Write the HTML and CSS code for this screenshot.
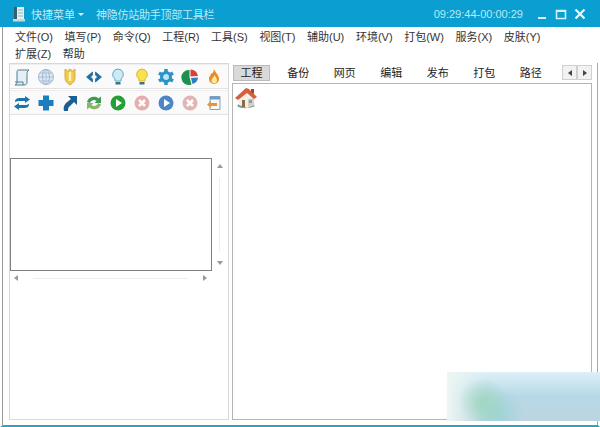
FILE: index.html
```html
<!DOCTYPE html>
<html lang="zh-CN">
<head>
<meta charset="UTF-8" />
<title>神隐仿站助手顶部工具栏</title>
<link rel="stylesheet" href="styles.css">
</head>
<body>

<div class="window">
  <header class="titlebar">
    <svg class="app-icon" width="16" height="18" viewBox="0 0 16 18">
      <path d="M3 2h10v14H3z" fill="#e9eef0"/>
      <path d="M3 2h3v14H3z" fill="#34606f"/>
      <path d="M7 5h5M7 8h5M7 11h5" stroke="#8fb5c2" stroke-width="1.2"/>
      <path d="M2 14h12v2.500H2z" fill="#c9d6da"/>
    </svg>
    <span class="quick">快捷菜单</span>
    <span class="caret"></span>
    <span class="app-title">神隐仿站助手顶部工具栏</span>
    <span class="clock">09:29:44-00:00:29</span>
    <div class="win-btns">
      <svg width="12" height="12" viewBox="0 0 12 12"><path d="M2 10h8" stroke="#d5f1f9" stroke-width="2"/></svg>
      <svg width="12" height="12" viewBox="0 0 12 12"><path d="M1.500 2.500h9v8h-9z" fill="none" stroke="#d5f1f9" stroke-width="1.500"/><path d="M1 3h10" stroke="#d5f1f9" stroke-width="2"/></svg>
      <svg width="12" height="12" viewBox="0 0 12 12"><path d="M1.500 1.500l9 9M10.500 1.500l-9 9" stroke="#e6f7fc" stroke-width="2.200"/></svg>
    </div>
  </header>

  <nav class="menu">
    <a>文件(O)</a>
    <a>填写(P)</a>
    <a>命令(Q)</a>
    <a>工程(R)</a>
    <a>工具(S)</a>
    <a>视图(T)</a>
    <a>辅助(U)</a>
    <a>环境(V)</a>
    <a>打包(W)</a>
    <a>服务(X)</a>
    <a>皮肤(Y)</a>
    <a>扩展(Z)</a>
    <a>帮助</a>
  </nav>

  <div class="content">
    <aside class="side">
      <div class="toolbar">
        <svg width="18" height="18" viewBox="0 0 18 18"><path d="M5 2h11c-2 1-2 3-2 5v7c0 2-1 3-3 3H2c1.500-.5 2-1.500 2-3V4c0-1 .5-2 1-2z" fill="#e6eff3" stroke="#4f7f95"/><path d="M2 14h8v3" fill="none" stroke="#4f7f95"/></svg>
        <svg width="18" height="18" viewBox="0 0 18 18"><circle cx="9" cy="9" r="7.500" fill="#dce9f3" stroke="#9fb9cf"/><ellipse cx="9" cy="9" rx="3.500" ry="7.500" fill="none" stroke="#9fb9cf"/><path d="M1.500 9h15M3 5h12M3 13h12M9 1.500v15" stroke="#9fb9cf" stroke-width=".8"/></svg>
        <svg width="18" height="18" viewBox="0 0 18 18"><path d="M4 1l2.500 2L9 1l2.500 2L14 1v9c0 3-2.500 5.500-5 7-2.500-1.500-5-4-5-7z" fill="#eec84f" stroke="#d9ae3a"/><path d="M9 4v9" stroke="#fdf2b5" stroke-width="2.500"/></svg>
        <svg width="18" height="18" viewBox="0 0 18 18"><path d="M7.500 4L1.500 9l6 5v-3L5.500 9l2-2zM10.500 4l6 5-6 5v-3l2-2-2-2z" fill="#1f6f9f" stroke="#1f6f9f" stroke-width=".8"/></svg>
        <svg width="18" height="18" viewBox="0 0 18 18"><path d="M9 1a5.500 5.500 0 0 1 3 10v2H6v-2A5.500 5.500 0 0 1 9 1z" fill="#cfeaf5" stroke="#5fa9c9"/><path d="M6.500 14h5v2.500h-5z" fill="#3d7288"/></svg>
        <svg width="18" height="18" viewBox="0 0 18 18"><path d="M9 1a5.500 5.500 0 0 1 3 10v2H6v-2A5.500 5.500 0 0 1 9 1z" fill="#f8e24f" stroke="#dcb92c"/><path d="M6.500 14h5v2.500h-5z" fill="#3d7288"/></svg>
        <svg width="18" height="18" viewBox="0 0 18 18"><path d="M9 1v3M9 14v3M2 5l2.600 1.500M13.400 11.500L16 13M2 13l2.600-1.500M13.400 6.500L16 5" stroke="#2a93c8" stroke-width="3.500"/><circle cx="9" cy="9" r="4.500" fill="#bfe3f2" stroke="#2a93c8" stroke-width="3"/></svg>
        <svg width="18" height="18" viewBox="0 0 18 18"><path d="M8.500 2a7.500 7.500 0 1 0 2 14.500L8.500 9z" fill="#1f8f4d"/><path d="M9.500 1.500A7.500 7.500 0 0 1 17 8l-7.500 .5z" fill="#d8403a"/><path d="M10 10l7-.5a7.500 7.500 0 0 1-5.500 6.500z" fill="#2c7fc0"/></svg>
        <svg width="18" height="18" viewBox="0 0 18 18"><path d="M9 1c1 3 5 6 5 10a5 5 0 0 1-10 0c0-3 2-3 2-6 1 1 2 1 3-4z" fill="#ee8a22"/><path d="M9.500 7c1 2 2.500 3.500 2.500 5.500a2.800 2.800 0 0 1-5.600 0C6.400 11 8.500 10 9.500 7z" fill="#fbeaa0"/></svg>
      </div>
      <div class="toolbar">
        <svg width="18" height="18" viewBox="0 0 18 18"><path d="M2 8c0-3 2-4 5-4h5V2l5 3.500L12 9V7H7c-2 0-3 0-5 1zM16 10c0 3-2 4-5 4H6v2l-5-3.500L6 9v2h5c2 0 3 0 5-1z" fill="#1d74a8"/></svg>
        <svg width="18" height="18" viewBox="0 0 18 18"><path d="M6 1.500h6v4.500h4.500v6H12v4.500H6V12H1.500V6H6z" fill="#1c7cc0"/></svg>
        <svg width="18" height="18" viewBox="0 0 18 18"><path d="M7 2h9v9l-3-3-5 5c-1 1-1 2-1 4H3c-1-3 0-6 2-8l5-4z" fill="#1a5f94"/></svg>
        <svg width="18" height="18" viewBox="0 0 18 18"><path d="M2 8a7 7 0 0 1 11.500-3.500L16 2.500V9H9.500l2-2A4 4 0 0 0 5 9z" fill="#3f9a52"/><path d="M16 10a7 7 0 0 1-11.500 3.500L2 15.500V9h6.500l-2 2A4 4 0 0 0 13 9z" fill="#8cb56c"/></svg>
        <svg width="18" height="18" viewBox="0 0 18 18"><circle cx="9" cy="9" r="7.500" fill="#25a035"/><path d="M7 5l6 4-6 4z" fill="#fff"/></svg>
        <svg width="18" height="18" viewBox="0 0 18 18"><circle cx="9" cy="9" r="7.500" fill="#e6adad"/><path d="M6 6l6 6M12 6l-6 6" stroke="#fff" stroke-width="2.500"/></svg>
        <svg width="18" height="18" viewBox="0 0 18 18"><circle cx="9" cy="9" r="7.500" fill="#4a86c8"/><path d="M7 5l6 4-6 4z" fill="#fff"/></svg>
        <svg width="18" height="18" viewBox="0 0 18 18"><circle cx="9" cy="9" r="7.500" fill="#e3b4b4"/><path d="M6 6l6 6M12 6l-6 6" stroke="#fff" stroke-width="2.500"/></svg>
        <svg width="18" height="18" viewBox="0 0 18 18"><path d="M5 2.500h10v13H5z" fill="#f4f6f7" stroke="#8aa3b3"/><path d="M5 2.500h10v3H5z" fill="#6d9fc4"/><path d="M2 10.500l4-3.500v2h6v3H6v2z" fill="#e3963f"/></svg>
      </div>

      <div class="list-area">
        <div class="list-row">
          <div class="listbox"></div>
          <div class="vscroll">
            <span class="arrow up"></span>
            <span class="vtrack"></span>
            <span class="arrow down"></span>
          </div>
        </div>
        <div class="hscroll">
          <span class="arrow left"></span>
          <span class="htrack"></span>
          <span class="arrow right"></span>
        </div>
      </div>
    </aside>

    <section class="main">
      <div class="tabs">
        <a class="tab active">工程</a>
        <a class="tab">备份</a>
        <a class="tab">网页</a>
        <a class="tab">编辑</a>
        <a class="tab">发布</a>
        <a class="tab">打包</a>
        <a class="tab">路径</a>
        <div class="tab-nav">
          <span><i class="arrow left dark"></i></span>
          <span><i class="arrow right dark"></i></span>
        </div>
      </div>
      <div class="pane">
        <svg width="24" height="24" viewBox="0 0 24 24">
          <path d="M3 20c4 3 12 3 18 0l-4-3H6z" fill="#6f9d94"/>
          <path d="M5 11l8-6 7 6v8l-7 3-8-3z" fill="#f6efe4"/>
          <path d="M14 13l6-1v7l-6 3z" fill="#d9cfc0"/>
          <path d="M1 12L12 2l3 1 8 8-3 2-7-6-9 7z" fill="#d5603a"/>
          <path d="M17 3h3v5l-3-2z" fill="#a8402a"/>
          <path d="M8 14h3v7H8z" fill="#8d6a49"/>
          <path d="M15 14h3v3h-3z" fill="#6fa3c7"/>
        </svg>
      </div>
    </section>
  </div>

  <div class="watermark"></div>
</div>

</body>
</html>
```

FILE: styles.css
```css
html, body {
  margin: 0;
  padding: 0;
}
body {
  width: 600px;
  height: 427px;
  overflow: hidden;
  background: #fff;
  font-family: "Liberation Sans", "Noto Sans CJK SC", sans-serif;
  font-size: 11px;
  color: #333;
}

.window {
  position: relative;
  box-sizing: border-box;
  width: 600px;
  height: 427px;
  display: flex;
  flex-direction: column;
  border-left: 3px solid #fff;
  border-right: 2px solid #fff;
  border-bottom: 2px solid #2fa3bf;
}

/* title bar */
.titlebar {
  height: 27px;
  margin: 0 -2px 0 -3px;
  padding-left: 11px;
  display: flex;
  align-items: center;
  background: #0a9fd0;
  color: #bdeaf6;
}
.app-icon {
  margin-right: 1px;
}
.quick {
  margin-left: 3px;
}
.caret {
  width: 0;
  height: 0;
  margin: 2px 0 0 3px;
  border: 3px solid transparent;
  border-top: 3px solid #d5f1f9;
  border-bottom: 0;
}
.app-title {
  margin-left: 12px;
  letter-spacing: -.25px;
}
.clock {
  margin-left: auto;
  margin-right: 13px;
}
.win-btns {
  display: flex;
  gap: 7px;
  margin-right: 14px;
}

/* menu */
.menu {
  box-sizing: border-box;
  width: 560px;
  height: 36px;
  padding: 2px 0 0 12px;
  display: flex;
  flex-wrap: wrap;
  column-gap: 11.600px;
  align-content: flex-start;
  line-height: 17px;
  border-left: 1px solid #9a9a9a;
  margin-left: -1px;
}

/* panels */
.content {
  flex: 1;
  display: flex;
  min-height: 0;
  border-left: 1px solid #9a9a9a;
  border-right: 1px solid #a8a8a8;
  margin-left: -1px;
  padding: 0 5px 5px 6px;
}
.side {
  box-sizing: border-box;
  width: 220px;
  display: flex;
  flex-direction: column;
  border: 1px solid #d8d8d8;
  margin-right: 3px;
}
.toolbar {
  height: 25px;
  margin-bottom: 1px;
  padding: 1px 0 0 3px;
  display: flex;
  align-items: center;
  gap: 6px;
  background: #fafafa;
  border-bottom: 1px solid #e2e2e2;
  border-top: 1px solid #eee;
  box-sizing: border-box;
}

.list-area {
  margin-top: 42px;
}
.list-row {
  display: flex;
}
.listbox {
  box-sizing: border-box;
  width: 202px;
  height: 113px;
  background: #fff;
  border: 1px solid #808080;
}
.vscroll {
  width: 15px;
  display: flex;
  flex-direction: column;
  align-items: center;
  padding: 6px 0 6px;
  box-sizing: border-box;
}
.vtrack {
  flex: 1;
  width: 1px;
  margin: 10px 0;
  background: #eee;
}
.hscroll {
  box-sizing: border-box;
  width: 202px;
  height: 14px;
  padding: 0 5px 0 4px;
  display: flex;
  align-items: center;
}
.htrack {
  flex: 1;
  height: 1px;
  margin: 0 15px;
  background: #eee;
}
.arrow {
  display: block;
  width: 0;
  height: 0;
  border: 3px solid transparent;
}
.arrow.up {
  border-top: 0;
  border-bottom: 4px solid #999;
}
.arrow.down {
  border-bottom: 0;
  border-top: 4px solid #999;
}
.arrow.left {
  border-left: 0;
  border-right: 4px solid #999;
}
.arrow.right {
  border-right: 0;
  border-left: 4px solid #999;
}
.arrow.left.dark {
  border-right-color: #444;
}
.arrow.right.dark {
  border-left-color: #444;
}

/* tabs */
.main {
  flex: 1;
  min-width: 0;
  display: flex;
  flex-direction: column;
}
.tabs {
  height: 20px;
  padding: 2px 0 0 1px;
  display: flex;
  align-items: flex-start;
  box-sizing: border-box;
}
.tab {
  width: 46.500px;
  height: 16px;
  line-height: 16px;
  text-align: center;
  color: #222;
  flex: none;
}
.tab.active {
  box-sizing: border-box;
  width: 37px;
  margin-right: 5px;
  background: #d9d9d9;
  border: 1px solid #bbb;
  line-height: 14px;
}
.tab-nav {
  margin-left: auto;
  display: flex;
}
.tab-nav span {
  box-sizing: border-box;
  width: 15px;
  height: 15px;
  display: flex;
  align-items: center;
  justify-content: center;
  background: #f2f2f2;
  border: 1px solid #d0d0d0;
}
.pane {
  flex: 1;
  padding: 2px 1px;
  background: #fff;
  border: 1px solid #b4b4b4;
}
.pane svg {
  display: block;
}

/* fuzzy image-host stamp in the corner */
.watermark {
  position: absolute;
  left: 444px;
  top: 372px;
  right: -2px;
  height: 49px;
  background:
    radial-gradient(circle at 36px 30px, rgba(160, 215, 190, .95), rgba(170, 220, 215, 0) 24px),
    radial-gradient(circle at 50px 42px, rgba(150, 210, 210, .8), rgba(170, 220, 215, 0) 26px),
    linear-gradient(90deg, #eef6f2 0, rgba(238, 246, 242, 0) 40px),
    linear-gradient(180deg, #dcf0f7, #b6d9e6 50%, #bcd5df);
}
```
